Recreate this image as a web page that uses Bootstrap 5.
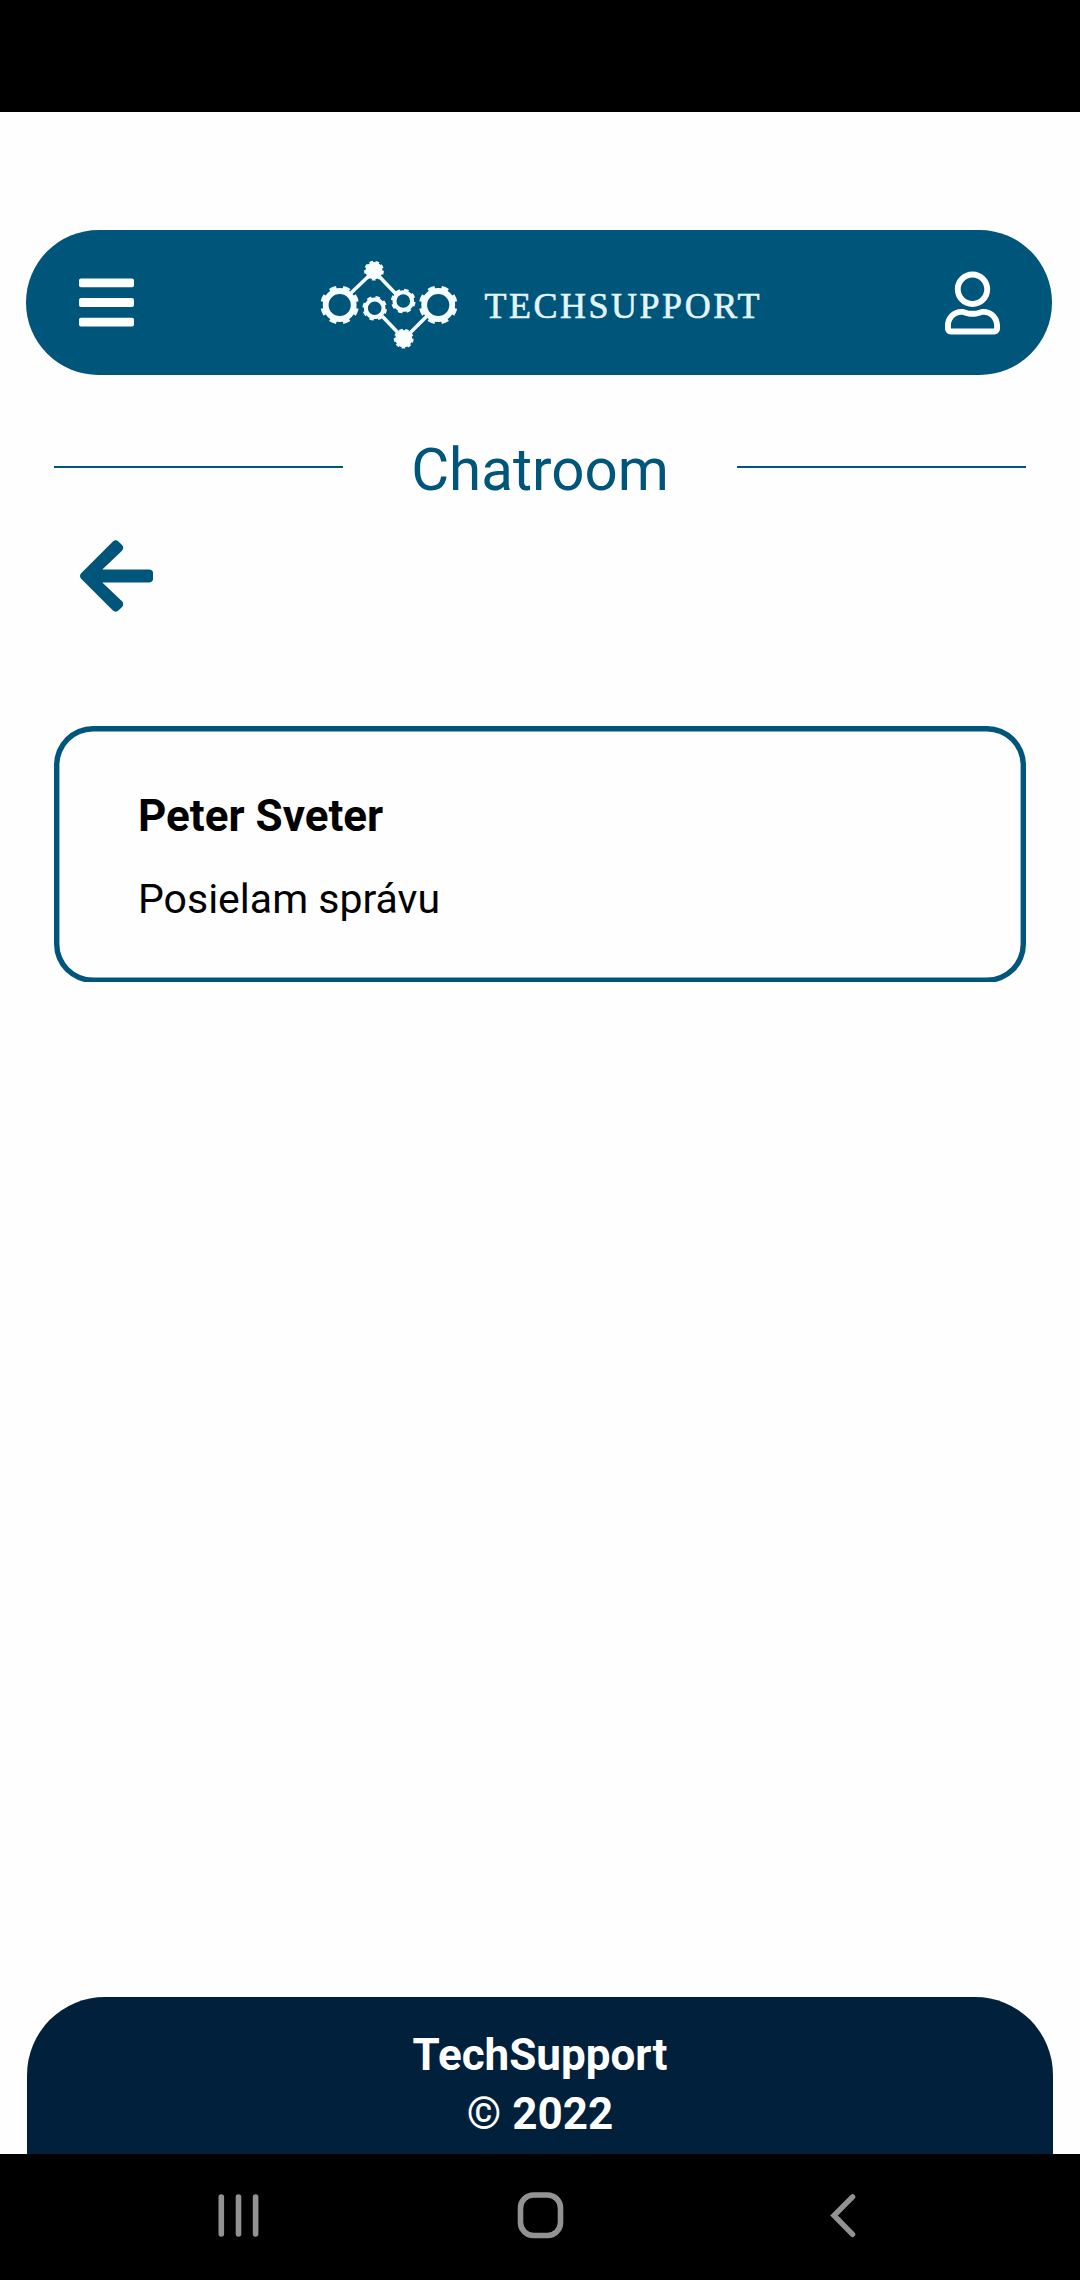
<!DOCTYPE html>
<html lang="sk">
<head>
<meta charset="utf-8">
<meta name="viewport" content="width=device-width, initial-scale=1">
<title>TechSupport – Chatroom</title>
<link href="https://cdn.jsdelivr.net/npm/bootstrap@5.3.0/dist/css/bootstrap.min.css" rel="stylesheet">
<style>
  body { font-family: Roboto, sans-serif; background: #fefefe; color: #000; }
  .screen { height: 2280px; width: 1080px; overflow: hidden; }
  .status-strip { height: 112px; background: #000; }
  .top-nav { margin: 118px 28px 0 26px; height: 145px; border-radius: 73px; background: #00557a; padding: 0 52px 0 53px; }
  .brand-logo { margin-left: 2px; }
  .title-row { margin: 0 54px; height: 134px; padding-top: 52px; color: #00557a; }
  .title-rule { width: 289px; height: 2px; background: #00557a; margin-top: -2px; }
  .room-title { font-size: 58.3px; line-height: 68px; font-weight: 400; margin: 3px 0 0; }
  .back-link { margin: 25px 0 0 79.7px; width: 73.2px; height: 84px; color: #00557a; }
  .msg-clip { margin: 108px 54px 0; height: 256px; overflow: hidden; }
  .msg-box { height: 257px; border-radius: 39px; box-shadow: inset 0 0 0 5.4px #00557a; padding: 64px 84px 0; }
  .msg-name { font-size: 44px; line-height: 52px; font-weight: 700; }
  .msg-text { font-size: 41px; line-height: 48px; margin-top: 33px; }
  .site-foot { margin: 0 27px; height: 157px; border-radius: 78px 78px 0 0; background: #00203b; color: #fff; font-size: 44px; line-height: 59px; font-weight: 700; padding-top: 29px; }
  .sys-nav { height: 126px; background: #000; }
</style>
</head>
<body>
<div class="screen d-flex flex-column">
  <div class="status-strip flex-shrink-0"></div>
  <nav class="top-nav flex-shrink-0 d-flex align-items-center justify-content-between">
    <svg width="55" height="63" viewBox="0 0 448 512" fill="#fff"><path d="M16 132h416c8.8 0 16-7.200 16-16V76c0-8.800-7.200-16-16-16H16C7.200 60 0 67.200 0 76v40c0 8.800 7.200 16 16 16zm0 160h416c8.800 0 16-7.200 16-16v-40c0-8.800-7.200-16-16-16H16c-8.800 0-16 7.200-16 16v40c0 8.800 7.200 16 16 16zm0 160h416c8.800 0 16-7.200 16-16v-40c0-8.800-7.200-16-16-16H16c-8.800 0-16 7.200-16 16v40c0 8.800 7.200 16 16 16z"/></svg>
    <svg class="brand-logo" width="446" height="100" viewBox="318 252 446 100">
      <defs>
        <g id="gear-large" fill="none">
          <circle r="14" stroke-width="5.800"/>
          <circle r="17" stroke-width="4.600" pathLength="8" stroke-dasharray=".5 .5" stroke-dashoffset="-.25"/>
        </g>
        <g id="gear-small" fill="none">
          <circle r="8.800" stroke-width="4"/>
          <circle r="10.700" stroke-width="3.200" pathLength="8" stroke-dasharray=".52 .48" stroke-dashoffset="-.1"/>
        </g>
        <g id="gear-solid">
          <circle r="8.600" stroke="none" fill="#f8feff"/>
          <circle r="8.600" fill="none" stroke-width="2.600" pathLength="9" stroke-dasharray=".6 .4"/>
        </g>
      </defs>
      <g stroke="#f4fcff">
        <path fill="none" stroke-width="3.600" d="M351 292L374 270L396 293M382 315L404 338L427 315"/>
        <use href="#gear-large" x="339.700" y="304"/>
        <use href="#gear-large" x="438.200" y="304"/>
        <use href="#gear-small" x="374.700" y="307.300"/>
        <use href="#gear-small" x="403.300" y="300"/>
        <use href="#gear-solid" x="374" y="269.700"/>
        <use href="#gear-solid" x="403.700" y="337.700"/>
      </g>
      <text x="484.500" y="316.500" font-family="Liberation Serif, serif" font-size="36" fill="#e2f5fc" stroke="#e2f5fc" stroke-width=".6" textLength="275">TECHSUPPORT</text>
    </svg>
    <svg width="55" height="64" viewBox="0 0 448 512" fill="#fff"><path d="M313.600 304c-28.700 0-42.500 16-89.600 16-47.100 0-60.800-16-89.600-16C60.200 304 0 364.200 0 438.400V464c0 26.500 21.500 48 48 48h352c26.500 0 48-21.500 48-48v-25.600c0-74.200-60.200-134.400-134.400-134.400zM400 464H48v-25.600c0-47.600 38.800-86.400 86.400-86.400 14.600 0 38.300 16 89.600 16 51.700 0 74.900-16 89.600-16 47.600 0 86.400 38.800 86.400 86.400V464zM224 288c79.500 0 144-64.500 144-144S303.500 0 224 0 80 64.500 80 144s64.500 144 144 144zm0-240c52.900 0 96 43.100 96 96s-43.100 96-96 96-96-43.100-96-96 43.100-96 96-96z"/></svg>
  </nav>
  <div class="title-row flex-shrink-0 d-flex align-items-center justify-content-between">
    <div class="title-rule"></div>
    <h1 class="room-title">Chatroom</h1>
    <div class="title-rule"></div>
  </div>
  <a class="back-link flex-shrink-0 d-block" href="#" aria-label="Späť">
    <svg class="d-block" width="73.200" height="84" viewBox="0 0 448 512" fill="currentColor"><path d="M257.500 445.100l-22.200 22.200c-9.400 9.400-24.600 9.400-33.900 0L7 273c-9.400-9.400-9.400-24.600 0-33.900L201.400 44.700c9.400-9.400 24.600-9.400 33.900 0l22.200 22.200c9.500 9.500 9.300 25-.4 34.300L136.600 216H424c13.300 0 24 10.700 24 24v32c0 13.300-10.700 24-24 24H136.600l120.500 114.800c9.800 9.300 10 24.800.4 34.300z"/></svg>
  </a>
  <div class="msg-clip flex-shrink-0">
    <div class="msg-box">
      <div class="msg-name">Peter Sveter</div>
      <div class="msg-text">Posielam správu</div>
    </div>
  </div>
  <footer class="site-foot flex-shrink-0 mt-auto text-center">TechSupport<br>© 2022</footer>
  <div class="sys-nav flex-shrink-0">
    <svg class="d-block" width="1080" height="126" viewBox="0 2154 1080 126" fill="none" stroke="#929292" stroke-linecap="round">
      <path stroke-width="5.600" d="M221.300 2197V2234M238.500 2197V2234M255.600 2197V2234"/>
      <rect x="520.500" y="2195" width="40" height="40.500" rx="13" stroke-width="5.600"/>
      <path stroke-width="5.400" d="M852.600 2196.800L834 2215.500L852.600 2234.300"/>
    </svg>
  </div>
</div>
<script src="https://cdn.jsdelivr.net/npm/bootstrap@5.3.0/dist/js/bootstrap.bundle.min.js"></script>
</body>
</html>
